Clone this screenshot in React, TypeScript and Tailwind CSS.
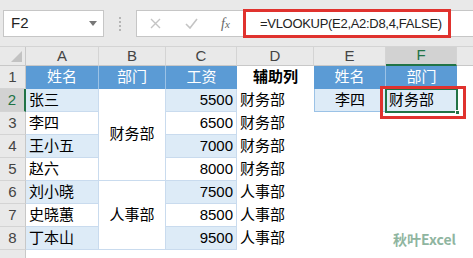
import React from "react";

const CJK = "font-['Liberation_Sans','Noto_Sans_CJK_SC',sans-serif]";

const band = "bg-[#ddebf7]";
const hdrBlue = "bg-[#5b9bd5] text-white";

function RowHead({ n, sel }: { n: string; sel?: boolean }) {
  return (
    <div
      className={
        "flex items-center justify-center text-[15px] border-b border-[#d4d4d4] " +
        (sel
          ? "bg-[#d2d2d2] text-[#217346] border-r-2 border-r-[#217346]"
          : "bg-[#e9e9e9] text-[#444] border-r border-r-[#c8c8c8]")
      }
    >
      {n}
    </div>
  );
}

function ColHead({ l, sel }: { l: string; sel?: boolean }) {
  return (
    <div
      className={
        "flex items-center justify-center text-[15px] border-r border-[#d4d4d4] " +
        (sel
          ? "bg-[#d2d2d2] text-[#217346] border-b-2 border-b-[#217346]"
          : "bg-[#e9e9e9] text-[#444] border-b border-b-[#c8c8c8]")
      }
    >
      {l}
    </div>
  );
}

export default function App() {
  const rows = [
    { n: "2", a: "张三", c: "5500", d: "财务部", b: true },
    { n: "3", a: "李四", c: "6500", d: "财务部", b: false },
    { n: "4", a: "王小五", c: "7000", d: "财务部", b: true },
    { n: "5", a: "赵六", c: "8000", d: "财务部", b: false },
    { n: "6", a: "刘小晓", c: "7500", d: "人事部", b: true },
    { n: "7", a: "史晓蕙", c: "8500", d: "人事部", b: false },
    { n: "8", a: "丁本山", c: "9500", d: "人事部", b: true },
  ];

  return (
    <div className={"relative w-[473px] h-[258px] overflow-hidden bg-white text-black " + CJK}>
      {/* formula bar */}
      <div className="h-[47px] bg-[#e9e9e9] flex items-start pt-[10px] pl-[3px] border-b border-[#d4d4d4]">
        <div className="w-[101px] h-[27px] bg-white border border-[#c6c6c6] flex items-center pl-[7px] pr-[6px] justify-between">
          <span className="text-[15px] text-[#222]">F2</span>
          <svg width="8" height="5" viewBox="0 0 8 5">
            <path d="M0 0 H8 L4 5 Z" fill="#777" />
          </svg>
        </div>
        <div className="w-[32px] h-[27px] flex flex-col items-center justify-center gap-[2px]">
          <span className="block w-[2px] h-[2px] bg-[#b5b5b5]" />
          <span className="block w-[2px] h-[2px] bg-[#b5b5b5]" />
          <span className="block w-[2px] h-[2px] bg-[#b5b5b5]" />
          <span className="block w-[2px] h-[2px] bg-[#b5b5b5]" />
        </div>
        <div className="flex-1 h-[27px] bg-white border border-[#c6c6c6] border-r-0 flex items-center">
          <div className="w-[106px] flex items-center h-full">
            <svg className="ml-[13px]" width="11" height="11" viewBox="0 0 11 11">
              <path d="M1 1 L10 10 M10 1 L1 10" stroke="#c4c4c4" strokeWidth="1.4" />
            </svg>
            <svg className="ml-[24px]" width="13" height="11" viewBox="0 0 13 11">
              <path d="M1 6 L5 10 L12 1" stroke="#c4c4c4" strokeWidth="1.6" fill="none" />
            </svg>
            <span className="ml-[23px] text-[14px] italic text-[#666] font-['Liberation_Serif',serif]">
              f<span className="text-[11px]">x</span>
            </span>
          </div>
          <div className="ml-[17px] text-[13px] text-[#222] font-['Liberation_Sans',sans-serif] tracking-[-0.3px]">
            =VLOOKUP(E2,A2:D8,4,FALSE)
          </div>
        </div>
      </div>

      {/* sheet grid */}
      <div className="grid grid-cols-[26px_73px_67px_71px_77px_72px_71px_1fr] grid-rows-[19px_repeat(8,23px)_12px]">
        {/* column headers */}
        <div className="bg-[#e9e9e9] border-r border-b border-[#c8c8c8] relative">
          <svg className="absolute right-[3px] bottom-[3px]" width="11" height="11" viewBox="0 0 11 11">
            <path d="M11 0 V11 H0 Z" fill="#c2c2c2" />
          </svg>
        </div>
        <ColHead l="A" />
        <ColHead l="B" />
        <ColHead l="C" />
        <ColHead l="D" />
        <ColHead l="E" />
        <ColHead l="F" sel />
        <div className="bg-[#e9e9e9] border-b border-[#c8c8c8]" />

        {/* row 1 */}
        <RowHead n="1" />
        <div className={"flex items-center justify-center text-[15px] border-r border-[#9bc2e6] " + hdrBlue}>姓名</div>
        <div className={"flex items-center justify-center text-[15px] border-r border-[#9bc2e6] " + hdrBlue}>部门</div>
        <div className={"flex items-center justify-center text-[15px] " + hdrBlue}>工资</div>
        <div className="flex items-center justify-center text-[15px] font-bold">辅助列</div>
        <div className={"flex items-center justify-center text-[15px] border-r border-[#9bc2e6] " + hdrBlue}>姓名</div>
        <div className={"flex items-center justify-center text-[15px] " + hdrBlue}>部门</div>
        <div />

        {rows.map((r, i) => (
          <React.Fragment key={r.n}>
            <RowHead n={r.n} sel={i === 0} />
            <div
              className={
                "flex items-center pl-[3px] text-[15px] border-b border-r border-[#c9dbee] " +
                (r.b ? band : "bg-white")
              }
            >
              {r.a}
            </div>
            {i === 0 && (
              <div className="row-span-4 flex items-center justify-center text-[15px] border-b border-r border-[#c9dbee] bg-white">
                财务部
              </div>
            )}
            {i === 4 && (
              <div className="row-span-3 flex items-center justify-center text-[15px] border-b border-r border-[#c9dbee] bg-white">
                人事部
              </div>
            )}
            <div
              className={
                "flex items-center justify-end pr-[3px] text-[15px] border-b border-r border-[#c9dbee] " +
                (r.b ? band : "bg-white")
              }
            >
              {r.c}
            </div>
            <div className="flex items-center pl-[3px] text-[15px]">{r.d}</div>
            {i === 0 ? (
              <>
                <div className={"flex items-center justify-center text-[15px] border-l border-b border-r border-[#9bc2e6] " + band}>
                  李四
                </div>
                <div className={"relative flex items-center pl-[3px] text-[15px] " + band}>
                  <div className="absolute inset-[-1px] border-2 border-[#217346]" />
                  <div className="absolute right-[-3px] bottom-[-3px] w-[5px] h-[5px] bg-[#217346] border border-white" />
                  <span className="relative">财务部</span>
                </div>
              </>
            ) : (
              <>
                <div />
                <div />
              </>
            )}
            <div />
          </React.Fragment>
        ))}

        {/* row 9 partial */}
        <div className="bg-[#e9e9e9] border-r border-[#c8c8c8]" />
        <div className="col-span-7" />
      </div>

      {/* red highlight boxes */}
      <div className="absolute left-[243px] top-[9px] w-[208px] h-[29px] border-[3px] border-[#e0322e]" />
      <div className="absolute left-[380px] top-[86px] w-[86px] h-[33px] border-[3px] border-[#e0322e]" />

      {/* watermark */}
      <div className="absolute left-[393px] top-[230px] text-[14px] font-bold text-[#8fb5a0] font-['Noto_Sans_CJK_SC',sans-serif] leading-[18px]">
        秋叶Excel
      </div>
    </div>
  );
}
